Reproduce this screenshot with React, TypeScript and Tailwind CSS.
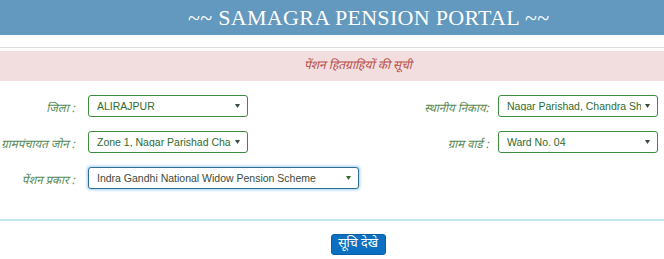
import React from "react";

const labelFont = { fontFamily: '"Noto Sans Devanagari", "Noto Sans", "Lohit Devanagari", sans-serif' };

function Caret({ className = "" }: { className?: string }) {
  return (
    <svg width="5" height="4" viewBox="0 0 5 4" className={className}>
      <path d="M0 0 L5 0 L2.5 4 Z" fill="currentColor" />
    </svg>
  );
}

function FakeSelect({
  value,
  width,
  focused = false,
}: {
  value: string;
  width: string;
  focused?: boolean;
}) {
  return (
    <div
      className={`${width} flex items-center h-[22px] rounded-[3px] bg-white pl-[8px] pr-[7px] ${
        focused
          ? "border border-[#2f6f8f] shadow-[0_0_3px_1px_rgba(102,175,233,0.6)] text-[#3a4a3a]"
          : "border border-[#3d8b3d] text-[#2f6b2f]"
      }`}
    >
      <span className="flex-1 overflow-hidden whitespace-nowrap text-[10.5px] font-['Liberation_Sans',Arial,sans-serif] leading-none">
        {value}
      </span>
      <Caret className={focused ? "text-[#2f6b2f] ml-1" : "text-[#3a4a3a] ml-1"} />
    </div>
  );
}

function Label({ children }: { children: React.ReactNode }) {
  return (
    <span className="italic text-[11.5px] leading-none text-[#558a55] whitespace-nowrap" style={labelFont}>
      {children}
    </span>
  );
}

export default function App() {
  return (
    <div className="w-[664px] h-[259px] bg-white overflow-hidden">
      {/* header */}
      <div className="h-[35px] bg-[#6399bf] flex items-center pl-[188px]">
        <h1 className="text-white text-[22px] leading-none font-['Liberation_Serif',serif] tracking-[0.3px]">
          ~~ SAMAGRA PENSION PORTAL ~~
        </h1>
      </div>

      <div className="h-[12px]" />
      <div className="h-px bg-[#dcdcdc]" />
      <div className="h-[3px]" />

      {/* list title */}
      <div className="h-[30px] bg-[#f2dede] flex items-center justify-center pl-[52px]">
        <span className="italic text-[12px] leading-none text-[#b9504c]" style={labelFont}>
          पेंशन हितग्राहियों की सूची
        </span>
      </div>

      {/* form */}
      <div className="pt-[14px] flex flex-col gap-[14px]">
        <div className="flex items-center h-[22px]">
          <div className="w-[75px] text-right">
            <Label>जिला :</Label>
          </div>
          <div className="ml-[13px]">
            <FakeSelect value="ALIRAJPUR" width="w-[160px]" />
          </div>
          <div className="flex-1 text-right pr-[9px]">
            <Label>स्थानीय निकाय:</Label>
          </div>
          <div className="mr-[6px]">
            <FakeSelect value="Nagar Parishad, Chandra Shekhar Azad Nagar" width="w-[160px]" />
          </div>
        </div>

        <div className="flex items-center h-[22px]">
          <div className="w-[75px] text-right">
            <Label>ग्रामपंचायत जोन :</Label>
          </div>
          <div className="ml-[13px]">
            <FakeSelect value="Zone 1, Nagar Parishad Chandra Shekhar" width="w-[160px]" />
          </div>
          <div className="flex-1 text-right pr-[9px]">
            <Label>ग्राम वार्ड :</Label>
          </div>
          <div className="mr-[6px]">
            <FakeSelect value="Ward No. 04" width="w-[160px]" />
          </div>
        </div>

        <div className="flex items-center h-[22px]">
          <div className="w-[75px] text-right">
            <Label>पेंशन प्रकार :</Label>
          </div>
          <div className="ml-[13px]">
            <FakeSelect value="Indra Gandhi National Widow Pension Scheme" width="w-[271px]" focused />
          </div>
        </div>
      </div>

      <div className="mt-[30px] h-[2px] bg-[#c5e9f2]" />

      {/* button */}
      <div className="pt-[13px] flex justify-center pl-[52px]">
        <button className="h-[21px] w-[55px] rounded-[3px] bg-[#0b6fc2] border border-[#0a5fa8] text-white text-[12.5px] leading-none" style={labelFont}>
          सूचि देखे
        </button>
      </div>
    </div>
  );
}
